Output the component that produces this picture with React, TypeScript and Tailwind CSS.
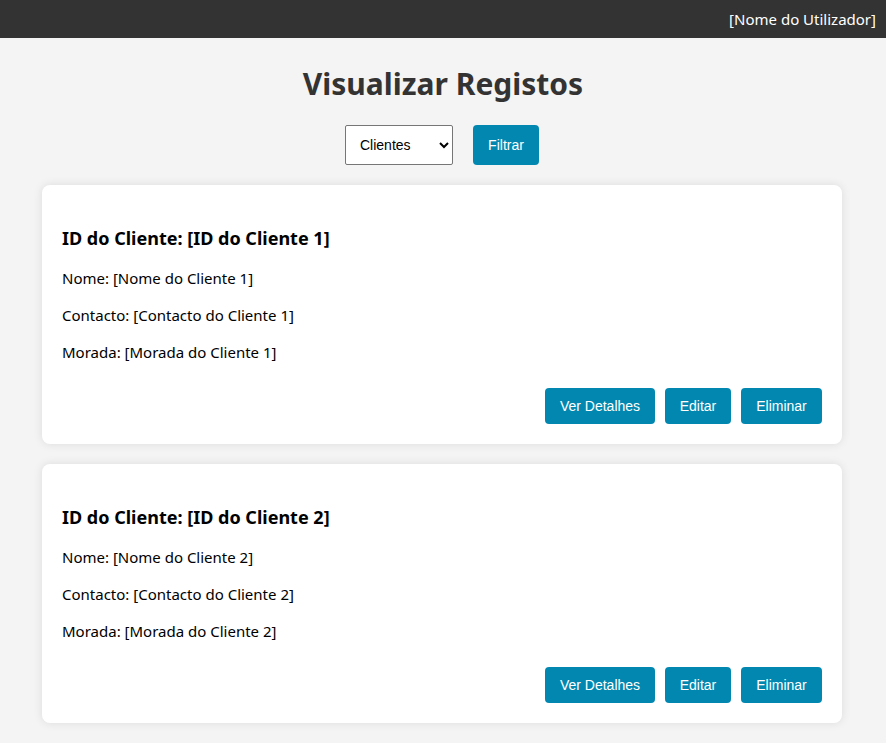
import React from "react";

const font = { fontFamily: '"Noto Sans", "Open Sans", sans-serif' };

function Card({ n }: { n: number }) {
  return (
    <div className="bg-white rounded-[8px] shadow-[0_0_10px_rgba(0,0,0,0.1)] px-[20px] pt-[41px] pb-[20px] text-black">
      <h3 className="text-[18px] font-bold leading-[24px]">ID do Cliente: [ID do Cliente {n}]</h3>
      <p className="mt-[17px] text-[15px] leading-[22px]">Nome: [Nome do Cliente {n}]</p>
      <p className="mt-[15px] text-[15px] leading-[22px]">Contacto: [Contacto do Cliente {n}]</p>
      <p className="mt-[15px] text-[15px] leading-[22px]">Morada: [Morada do Cliente {n}]</p>
      <div className="mt-[25px] flex justify-end gap-[10px] font-['Liberation_Sans',Arial,sans-serif] text-[14px] text-white">
        <button className="h-[36px] w-[110px] rounded-[4px] bg-[#0288b0]">Ver Detalhes</button>
        <button className="h-[36px] w-[66px] rounded-[4px] bg-[#0288b0]">Editar</button>
        <button className="h-[36px] w-[81px] rounded-[4px] bg-[#0288b0]">Eliminar</button>
      </div>
    </div>
  );
}

export default function App() {
  return (
    <div className="min-h-[743px] bg-[#f4f4f4]" style={font}>
      <header className="h-[38px] bg-[#333333] flex items-center justify-end pr-[10px] text-white text-[15px]">
        [Nome do Utilizador]
      </header>
      <h1 className="mt-[24px] text-center text-[30px] font-bold leading-[44px] text-[#333333]">Visualizar Registos</h1>
      <div className="mt-[19px] flex justify-center gap-[20px] pr-[2px] font-['Liberation_Sans',Arial,sans-serif] text-[14px]">
        <select className="h-[40px] w-[108px] border border-[#767676] rounded-[2px] bg-white px-[10px] text-black">
          <option>Clientes</option>
        </select>
        <button className="h-[40px] w-[66px] rounded-[4px] bg-[#0288b0] text-white">Filtrar</button>
      </div>
      <div className="mt-[20px] w-[800px] ml-[42px] flex flex-col gap-[20px] pb-[20px]">
        <Card n={1} />
        <Card n={2} />
      </div>
    </div>
  );
}
